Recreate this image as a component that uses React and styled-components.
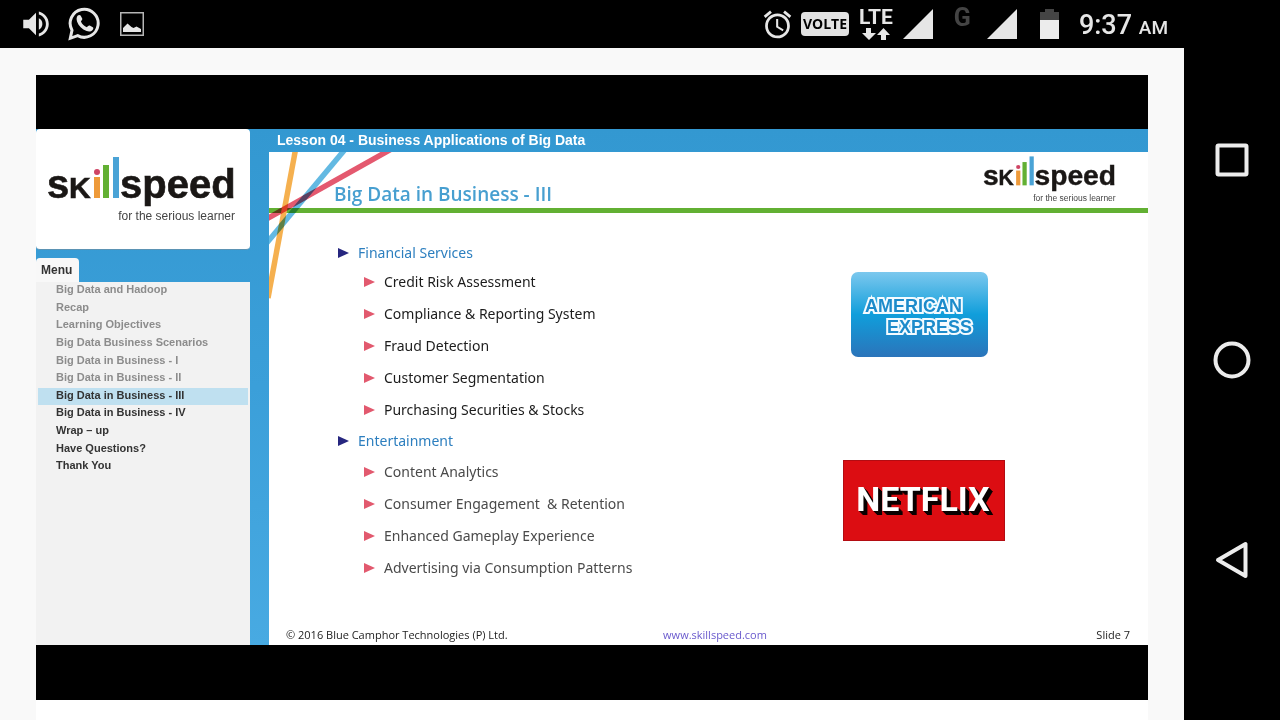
import React from 'react';
import styled, { createGlobalStyle } from 'styled-components';
import { MdVolumeUp, MdAlarm } from 'react-icons/md';

const GlobalStyle = createGlobalStyle`
  * { box-sizing: border-box; }
  body { margin: 0; background: #f9f9f9; font-family: "Open Sans", sans-serif; }
  ul, h1, h2, h3, p { margin: 0; padding: 0; font-weight: inherit; font-size: inherit; }
  ul { list-style: none; }
  svg { display: block; flex: none; }
`;

const Screen = styled.div`
  display: flex;
  min-height: 100vh;
`;

const Main = styled.main`
  flex: 1;
  min-width: 0;
  display: flex;
  flex-direction: column;
`;

const StatusBar = styled.header`
  display: flex;
  align-items: center;
  justify-content: space-between;
  height: 48px;
  background: #000;
  color: #e6e6e6;
  font-family: Roboto, sans-serif;
  padding: 0 16px 0 19px;
`;

const StatusGroup = styled.div`
  display: flex;
  align-items: center;
  gap: ${(p) => p.$gap}px;
`;

const VolteBadge = styled.span`
  width: 48px;
  height: 24px;
  border-radius: 4px;
  background: #e2e2e2;
  color: #000;
  font: 700 14px/24px "Open Sans", sans-serif;
  text-align: center;
`;

const Network = styled.div`
  display: flex;
  flex-direction: column;
  align-items: center;
  gap: 2px;
  font: 700 21px/18px Roboto, sans-serif;
`;

const Roaming = styled.span`
  align-self: flex-start;
  padding-left: 11px;
  color: #444;
  font: 700 25px/18px Roboto, sans-serif;
`;

const Clock = styled.time`
  padding-top: 5px;
  font: 500 27px/43px Roboto, sans-serif;
  white-space: nowrap;
`;

const Meridiem = styled.span`
  font-size: 19px;
`;

const NavBar = styled.nav`
  width: 96px;
  background: #000;
  display: flex;
  flex-direction: column;
  justify-content: center;
`;

const NavButton = styled.button`
  height: 200px;
  border: 0;
  padding: 0;
  background: transparent;
  display: flex;
  align-items: center;
  justify-content: center;
`;

const Stage = styled.div`
  flex: 1;
  display: flex;
  flex-direction: column;
  padding: 27px 36px 0;
`;

const Video = styled.section`
  background: #000;
  padding: 54px 0 55px;
`;

const PageFoot = styled.div`
  flex: 1;
  min-height: 20px;
  background: #fff;
`;

const Player = styled.div`
  display: flex;
  min-height: 516px;
  background: linear-gradient(#3398d1, #3b9fd9 50%, #48aae2);
`;

const Sidebar = styled.aside`
  width: 214px;
  margin-right: 19px;
  display: flex;
  flex-direction: column;
  font-family: "Liberation Sans", Arial, sans-serif;
`;

const BrandCard = styled.div`
  height: 121px;
  padding: 26px 12px 0;
  background: #fff;
  border-radius: 4px;
  border-bottom: 1px solid #5b93b4;
`;

const MenuTab = styled.h2`
  width: 43px;
  height: 24px;
  margin-top: 8px;
  padding-left: 5px;
  border-radius: 4px 4px 0 0;
  background: #f8f8f8;
  color: #333;
  font-size: 12px;
  font-weight: 700;
  line-height: 24px;
`;

const MenuPanel = styled.div`
  flex: 1;
  background: #f2f2f2;
  padding: 0 2px;
`;

const MenuList = styled.ul`
  display: grid;
  grid-auto-rows: 1fr;
  height: 194px;
`;

const MenuItem = styled.li`
  display: flex;
  align-items: flex-start;
  padding-left: 18px;
  background: ${(p) => (p.$current ? '#bfe0f0' : 'transparent')};
`;

const MenuLink = styled.a`
  color: ${(p) => (p.$seen ? '#8c8c8c' : '#333')};
  font-size: 11px;
  font-weight: 700;
  line-height: 14px;
  text-decoration: none;
`;

const Lesson = styled.div`
  flex: 1;
  min-width: 0;
  display: flex;
  flex-direction: column;
`;

const LessonTitle = styled.h1`
  padding-left: 8px;
  color: #fff;
  font: 700 14px/23px "Liberation Sans", Arial, sans-serif;
`;

const Slide = styled.article`
  position: relative;
  flex: 1;
  display: flex;
  flex-direction: column;
  background: #fff;
`;

const Ribbons = styled.svg`
  position: absolute;
  left: 0;
  top: 0;

  path + path { mix-blend-mode: multiply; }
`;

const SlideHeader = styled.header`
  display: flex;
  justify-content: space-between;
  height: 61px;
  padding: 3px 31px 0 65px;
  border-bottom: 5px solid #62b033;
`;

const SlideTitle = styled.h2`
  color: #479fd0;
  font-size: 19px;
  font-weight: 600;
  line-height: 24px;
  padding-top: 27px;
`;

const SlideBody = styled.div`
  flex: 1;
  display: flex;
  justify-content: space-between;
  padding: 27px 143px 0 69px;
  font-family: "Noto Sans", "Open Sans", sans-serif;
`;

const TopicTitle = styled.h3`
  display: flex;
  align-items: center;
  gap: 9px;
  color: #2d7fbf;
  font-size: 14px;
  line-height: ${(p) => (p.$first ? 26 : 30)}px;
`;

const Point = styled.li`
  display: flex;
  align-items: center;
  gap: 9px;
  padding-left: 26px;
  color: ${(p) => p.$color};
  font-size: 14px;
  line-height: 32px;
  white-space: pre;
`;

const Arrow = styled.span`
  border-left: 11px solid ${(p) => p.$color};
  border-top: 5px solid transparent;
  border-bottom: 5px solid transparent;
`;

const Brands = styled.div`
  display: flex;
  flex-direction: column;
  align-items: flex-start;
  gap: 103px;
  width: 162px;
  padding-top: 32px;
`;

const AmexArt = styled.svg`
  margin-left: 8px;
`;

const NetflixWord = styled.text`
  font: 700 34px Roboto, sans-serif;
  fill: #fff;
  text-shadow: 1px 1px #0a0000, 2px 2px #0a0000, 3px 3px #0a0000, 4px 4px #0a0000;
`;

const SlideFooter = styled.footer`
  display: grid;
  grid-template-columns: 1fr auto 1fr;
  padding: 0 18px 0 17px;
  color: #222;
  font-size: 11px;
  line-height: 20px;
`;

const SiteLink = styled.a`
  padding-left: 14px;
  color: #6a5acd;
  text-decoration: none;
`;

const SlideNumber = styled.span`
  text-align: right;
`;

function Logo({ width, height }) {
  return (
    <svg width={width} height={height} viewBox="0 0 188 68" fontFamily="Liberation Sans, Arial, sans-serif">
      <g fill="#1a1715" fontWeight="700" stroke="#1a1715" strokeWidth="0.6">
        <text x="-1" y="43" fontSize="40">s</text>
        <text x="21" y="43" fontSize="30">K</text>
        <text x="72" y="43" fontSize="40">speed</text>
      </g>
      <circle cx="49" cy="17" r="3" fill="#cf4464" />
      <rect x="46" y="22" width="6" height="21" fill="#ee9a3a" />
      <rect x="55" y="10" width="6" height="33" fill="#62b033" />
      <rect x="65" y="2" width="6" height="41" fill="#4aa3d6" />
      <text x="187" y="65" fontSize="12" fill="#444" textAnchor="end">for the serious learner</text>
    </svg>
  );
}

const SignalIcon = () => (
  <svg width="30" height="30" viewBox="0 0 30 30"><path d="M30 0V30H0Z" fill="#e6e6e6" /></svg>
);

const menu = [
  'Big Data and Hadoop', 'Recap', 'Learning Objectives', 'Big Data Business Scenarios',
  'Big Data in Business - I', 'Big Data in Business - II', 'Big Data in Business - III',
  'Big Data in Business - IV', 'Wrap – up', 'Have Questions?', 'Thank You',
];
const current = 6;

const topics = [
  {
    title: 'Financial Services',
    color: '#1c1c1c',
    points: ['Credit Risk Assessment', 'Compliance & Reporting System', 'Fraud Detection', 'Customer Segmentation', 'Purchasing Securities & Stocks'],
  },
  {
    title: 'Entertainment',
    color: '#4a4a4a',
    points: ['Content Analytics', 'Consumer Engagement  & Retention', 'Enhanced Gameplay Experience', 'Advertising via Consumption Patterns'],
  },
];

export default function App() {
  return (
    <Screen>
      <GlobalStyle />
      <Main>
        <StatusBar>
          <StatusGroup $gap={15}>
            <MdVolumeUp size={34} />
            <svg width="34" height="36" viewBox="0 0 34 36">
              <path d="M4 24.200A14 14 0 1 1 9.700 29.700L2.300 32.300Z" fill="none" stroke="#e6e6e6" strokeWidth="3" />
              <path d="M9.800 9.600c.8-.9 2.200-.9 2.800 0l1.600 3c.4.900-.3 1.800-1.300 2.800 1.300 2.700 3.300 4.700 6 5.800 1.100-1.200 1.900-2.100 2.800-1.600l3.100 1.600c.9.600.6 1.800-.2 2.700-1.600 1.700-3.600 2-6 1.100-4.600-1.700-8-5.100-9.500-9.300-.8-2.400-.7-4.500.7-6.100z" fill="#e6e6e6" />
            </svg>
            <svg width="30" height="24" viewBox="-3 0 30 24">
              <rect x="0.750" y="0.750" width="22.500" height="22.500" fill="none" stroke="#b5b5b5" strokeWidth="1.500" />
              <path d="M3 20v-4l4.500-4.500 4 3.500 2 1 3-1.500 4.500 2.500v3z" fill="#e6e6e6" />
            </svg>
          </StatusGroup>
          <StatusGroup $gap={10}>
            <StatusGroup $gap={7}>
              <MdAlarm size={33} />
              <VolteBadge>VOLTE</VolteBadge>
            </StatusGroup>
            <StatusGroup $gap={10}>
              <Network>
                LTE
                <svg width="28" height="12" viewBox="0 0 28 12" fill="#e6e6e6">
                  <path d="M4 0h5v5h5L7 12 0 5h4zM19 12h5V7h4L21.500 0 15 7h4z" />
                </svg>
              </Network>
              <SignalIcon />
            </StatusGroup>
            <StatusGroup $gap={16}>
              <Roaming>G</Roaming>
              <SignalIcon />
            </StatusGroup>
            <StatusGroup $gap={20}>
              <svg width="32" height="30" viewBox="-13 0 32 30">
                <path d="M0 3h5V0h9v3h5v8H0z" fill="#444" />
                <rect y="11" width="19" height="19" fill="#ececec" />
              </svg>
              <Clock>9:37 <Meridiem>AM</Meridiem></Clock>
            </StatusGroup>
          </StatusGroup>
        </StatusBar>
        <Stage>
          <Video>
            <Player>
              <Sidebar>
                <BrandCard><Logo width={188} height={68} /></BrandCard>
                <MenuTab>Menu</MenuTab>
                <MenuPanel>
                  <MenuList>
                    {menu.map((label, i) => (
                      <MenuItem key={label} $current={i === current}>
                        <MenuLink href="#" $seen={i < current}>{label}</MenuLink>
                      </MenuItem>
                    ))}
                  </MenuList>
                </MenuPanel>
              </Sidebar>
              <Lesson>
                <LessonTitle>Lesson 04 - Business Applications of Big Data</LessonTitle>
                <Slide>
                  <SlideHeader>
                    <SlideTitle>Big Data in Business - III</SlideTitle>
                    <Logo width={134} height={48} />
                  </SlideHeader>
                  <Ribbons width="126" height="148" viewBox="0 0 126 148" fill="none" strokeWidth="5.500">
                    <path d="M27 -5L-1 146" stroke="#f5b04f" />
                    <path d="M78 -5L-4 93" stroke="#63b9e2" />
                    <path d="M126 -5L-6 69" stroke="#e4596f" />
                  </Ribbons>
                  <SlideBody>
                    <div>
                      {topics.map((t, i) => (
                        <section key={t.title}>
                          <TopicTitle $first={i === 0}><Arrow $color="#26267f" />{t.title}</TopicTitle>
                          <ul>
                            {t.points.map((p) => (
                              <Point key={p} $color={t.color}><Arrow $color="#e2596e" />{p}</Point>
                            ))}
                          </ul>
                        </section>
                      ))}
                    </div>
                    <Brands>
                      <AmexArt width="137" height="85" viewBox="0 0 137 85">
                        <defs>
                          <linearGradient id="amex" x1="0" y1="0" x2="0" y2="1">
                            <stop offset="0" stopColor="#7cc8ee" />
                            <stop offset="0.500" stopColor="#109edb" />
                            <stop offset="1" stopColor="#2b74ba" />
                          </linearGradient>
                        </defs>
                        <rect width="137" height="85" rx="7" fill="url(#amex)" />
                        <g fontFamily="Liberation Sans, Arial, sans-serif" fontWeight="700" fontSize="18" fill="#1c8bcb" stroke="#f4fbff" strokeWidth="4" paintOrder="stroke">
                          <text x="14" y="40">AMERICAN</text>
                          <text x="36" y="61">EXPRESS</text>
                        </g>
                      </AmexArt>
                      <svg width="162" height="81" viewBox="0 0 162 81">
                        <rect x="0.500" y="0.500" width="161" height="80" fill="#dc0d12" stroke="#b30c12" />
                        <NetflixWord x="80" y="51" textAnchor="middle">NETFLIX</NetflixWord>
                      </svg>
                    </Brands>
                  </SlideBody>
                  <SlideFooter>
                    <span>© 2016 Blue Camphor Technologies (P) Ltd.</span>
                    <SiteLink href="#">www.skillspeed.com</SiteLink>
                    <SlideNumber>Slide 7</SlideNumber>
                  </SlideFooter>
                </Slide>
              </Lesson>
            </Player>
          </Video>
          <PageFoot />
        </Stage>
      </Main>
      <NavBar>
        <NavButton aria-label="Recent apps">
          <svg width="34" height="34" viewBox="0 0 34 34"><rect x="2.500" y="2.500" width="29" height="29" rx="1" fill="none" stroke="#ececec" strokeWidth="4" /></svg>
        </NavButton>
        <NavButton aria-label="Home">
          <svg width="38" height="38" viewBox="0 0 38 38"><circle cx="19" cy="19" r="16.500" fill="none" stroke="#ececec" strokeWidth="4" /></svg>
        </NavButton>
        <NavButton aria-label="Back">
          <svg width="34" height="38" viewBox="0 0 34 38"><path d="M30.500 3V35L3 19Z" fill="none" stroke="#ececec" strokeWidth="4" strokeLinejoin="round" /></svg>
        </NavButton>
      </NavBar>
    </Screen>
  );
}
